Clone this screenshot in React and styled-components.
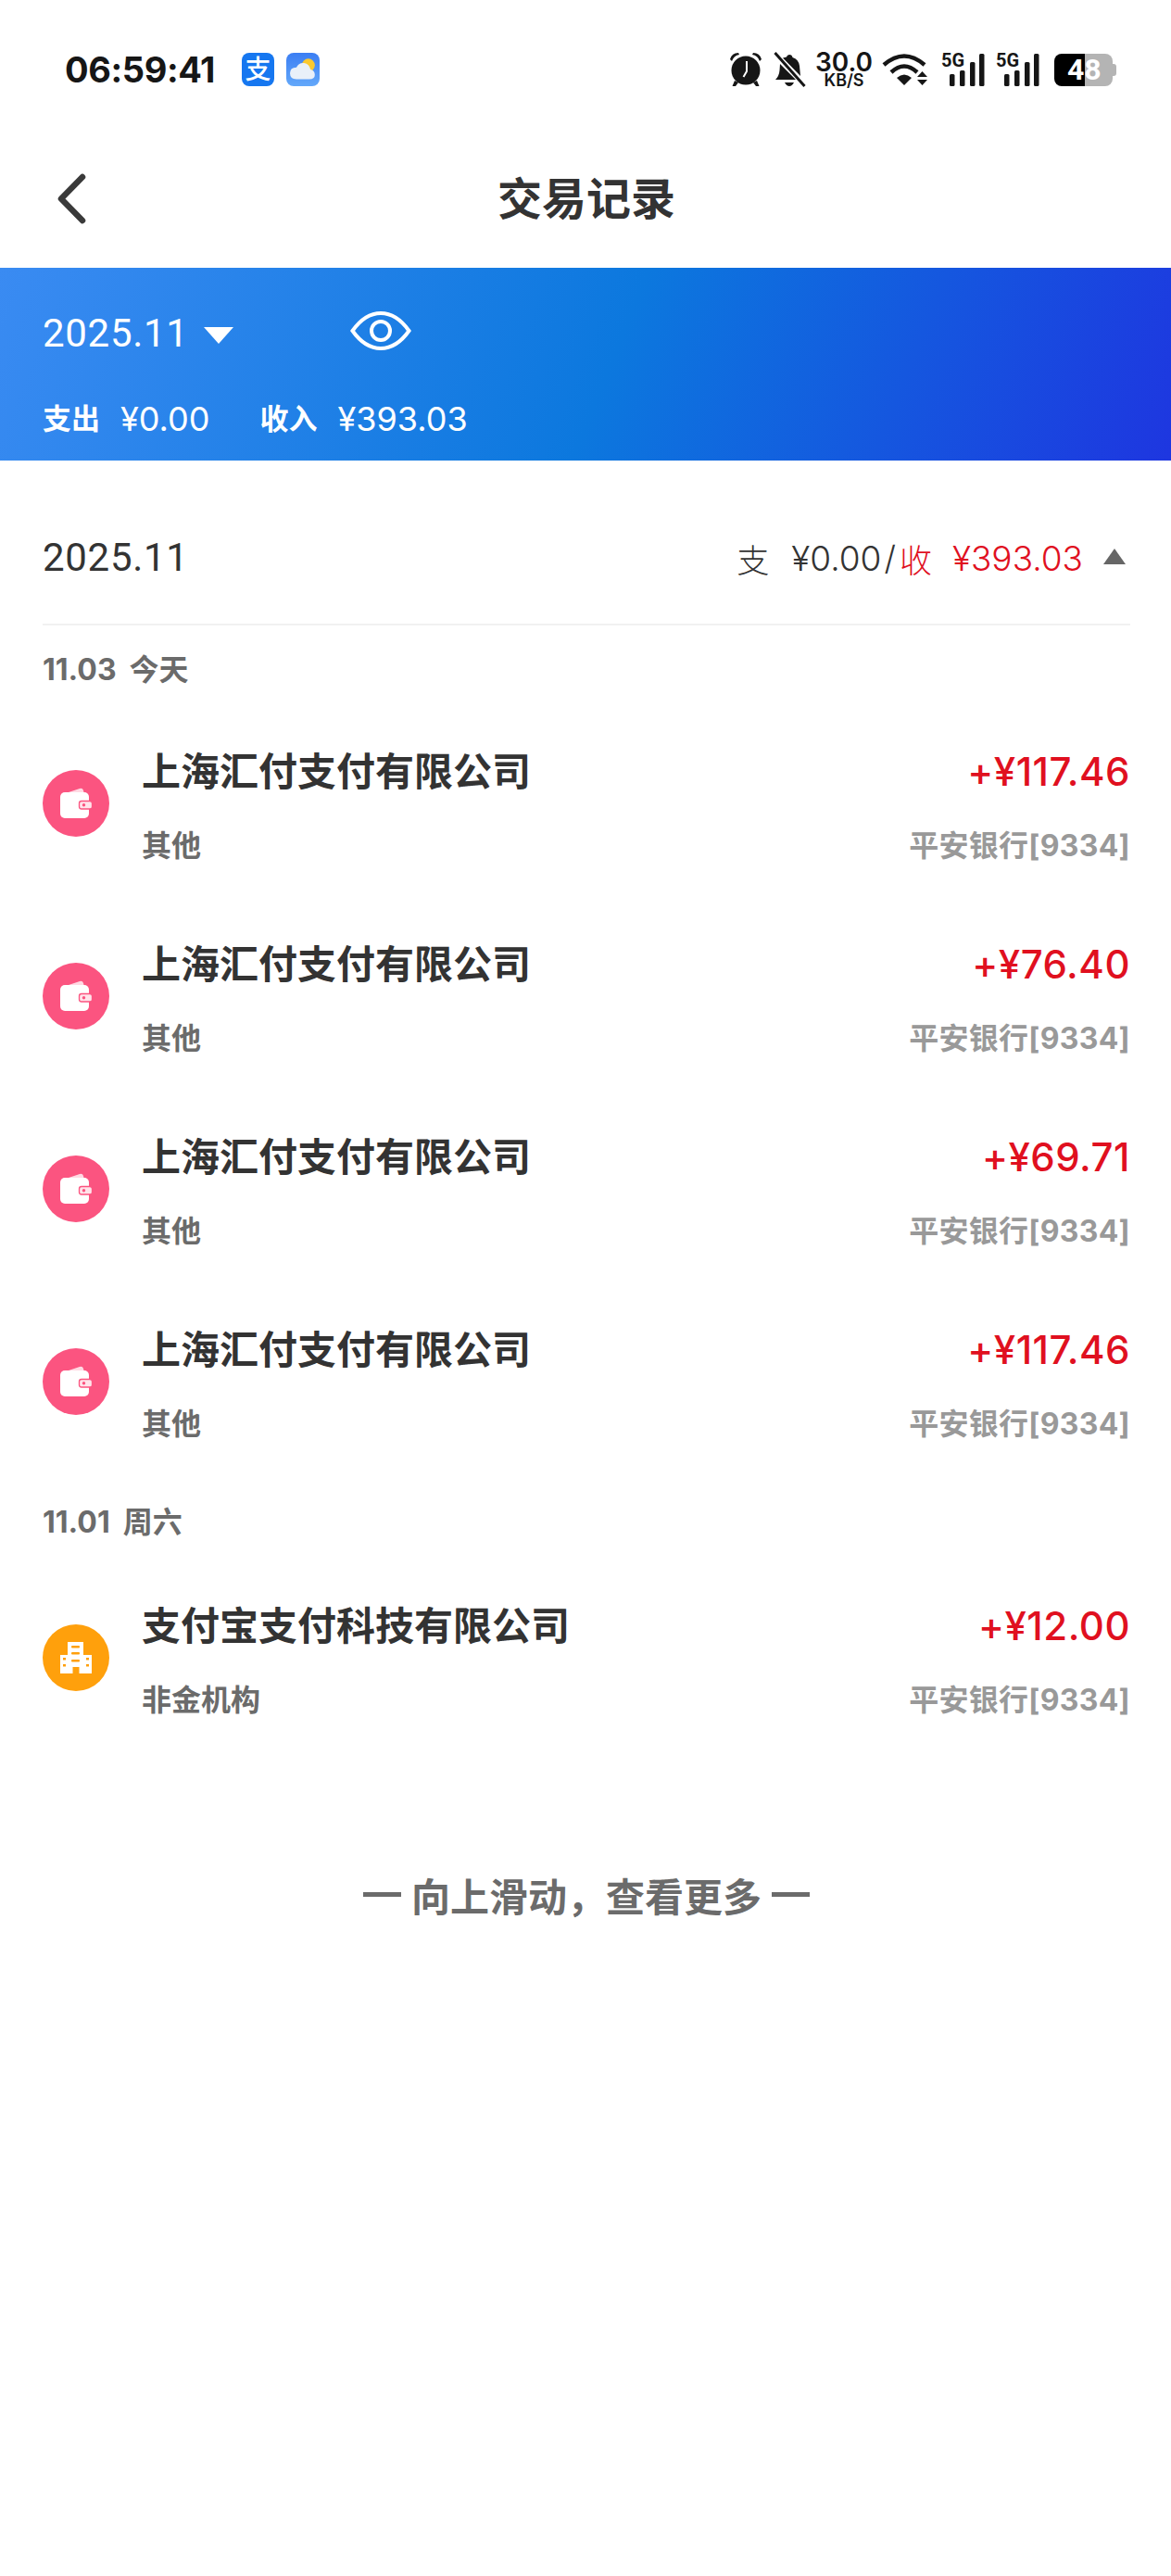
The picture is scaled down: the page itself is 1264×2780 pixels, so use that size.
import React from "react";
import styled, { createGlobalStyle } from "styled-components";

const GlobalStyle = createGlobalStyle`
  html, body {
    margin: 0;
    padding: 0;
    background: #fff;
    font-family: Inter, "Noto Sans CJK SC", sans-serif;
  }
  * { box-sizing: border-box; }
`;

const records = [
  {
    date: "11.03",
    day: "今天",
    items: [
      { name: "上海汇付支付有限公司", amount: "+¥117.46", kind: "其他", icon: "wallet" },
      { name: "上海汇付支付有限公司", amount: "+¥76.40", kind: "其他", icon: "wallet" },
      { name: "上海汇付支付有限公司", amount: "+¥69.71", kind: "其他", icon: "wallet" },
      { name: "上海汇付支付有限公司", amount: "+¥117.46", kind: "其他", icon: "wallet" },
    ],
  },
  {
    date: "11.01",
    day: "周六",
    items: [{ name: "支付宝支付科技有限公司", amount: "+¥12.00", kind: "非金机构", icon: "building" }],
  },
];

const AlarmIcon = () => (
  <svg width="36" height="38" viewBox="0 0 36 38">
    <path d="M1 8 Q3 1 10 1 L11 3 Q5 4 3 10 Z M35 8 Q33 1 26 1 L25 3 Q31 4 33 10 Z" fill="#161616" />
    <circle cx="18" cy="20" r="15.5" fill="#161616" />
    <path d="M6 31 L3.5 37 H7 L10 33 Z M30 31 L32.5 37 H29 L26 33 Z" fill="#161616" />
    <path d="M19 10 V21 L15.5 27" fill="none" stroke="#fff" strokeWidth="2" />
  </svg>
);

const BellOffIcon = () => (
  <svg width="35" height="38" viewBox="0 0 35 38">
    <path d="M17 3 Q20 3 20.5 6 Q27 8 28 15 L29 26 L10 6.5 Q12 6 14 5.5 Q14.500 3 17 3 Z" fill="#161616" />
    <path d="M7 13 L24 30 H2 Q6 26 6.500 20 Z" fill="#161616" />
    <path d="M12 33 H22 Q20 37 17 37 Q14 37 12 33 Z" fill="#161616" />
    <path d="M1.500 1 L33.500 37" stroke="#161616" strokeWidth="3" />
  </svg>
);

const WifiIcon = () => (
  <svg width="52" height="36" viewBox="0 0 52 36">
    <g fill="none" stroke="#161616" strokeWidth="4.500">
      <path d="M2 13 Q24 -6 46 13" />
      <path d="M10 21 Q24 8 38 21" />
    </g>
    <path d="M16 27 Q24 20 32 27 L24 35 Z" fill="#161616" />
    <path d="M38 26 L43.500 20 L49 26 Z M38 29 H49 L43.500 35 Z" fill="#161616" />
  </svg>
);

const WeatherIcon = () => (
  <svg width="28" height="24" viewBox="0 0 24 20">
    <circle cx="17" cy="6" r="6" fill="#fbc92f" />
    <path d="M6 19 Q0 19 0 13.500 Q0 8 6 8 Q8 3.500 13 4 Q18 5 19 10 Q23 11 23 15 Q23 19 18 19 Z" fill="#e9f0f9" />
  </svg>
);

const SignalBars = () => (
  <svg width="38" height="36" viewBox="0 0 38 36">
    <g fill="#161616">
      <rect x="0" y="23" width="5.500" height="13" rx="1.500" />
      <rect x="11" y="19" width="5.500" height="17" rx="1.500" />
      <rect x="22" y="10" width="5.500" height="26" rx="1.500" />
      <rect x="32" y="1" width="5.500" height="35" rx="1.500" />
    </g>
  </svg>
);

const BackIcon = () => (
  <svg width="31" height="55" viewBox="0 0 31 55">
    <path d="M27 4 L4 27.500 L27 51" fill="none" stroke="#3a3a3a" strokeWidth="6.500" strokeLinecap="round" strokeLinejoin="round" />
  </svg>
);

const EyeIcon = () => (
  <svg width="66" height="42" viewBox="0 0 66 42">
    <path d="M2.500 21 Q16 2 33 2 Q50 2 63.500 21 Q50 40 33 40 Q16 40 2.500 21 Z" fill="none" stroke="#fff" strokeWidth="4" />
    <circle cx="33" cy="21" r="10" fill="none" stroke="#fff" strokeWidth="4" />
  </svg>
);

const WalletIcon = () => (
  <svg width="36" height="34" viewBox="0 0 36 34">
    <path d="M7 6 L22 1 Q25 0 26 3 L27 7 Z" fill="#ffd9e3" />
    <rect x="1" y="5" width="31" height="28" rx="5" fill="#fff" />
    <rect x="21.500" y="14.500" width="14" height="8.500" rx="2.500" fill="#ffe3ea" stroke="#fb5480" strokeWidth="1.300" />
    <circle cx="26.500" cy="18.800" r="1.700" fill="#fb5480" />
  </svg>
);

const BuildingIcon = () => (
  <svg width="36" height="36" viewBox="0 0 36 36">
    <path d="M9 1 H26 V15 H35 V35 H21.500 V28 H14.500 V35 H1 V15 H9 Z" fill="#fff" />
    <g fill="#ffa00c">
      <rect x="13" y="5" width="9" height="2.500" rx="1" />
      <rect x="13" y="12" width="9" height="2.500" rx="1" />
      <rect x="13" y="20" width="9" height="2.500" rx="1" />
      <rect x="4" y="18" width="3" height="2.500" />
      <rect x="4" y="25" width="3" height="2.500" />
      <rect x="29" y="18" width="3" height="2.500" />
      <rect x="29" y="25" width="3" height="2.500" />
    </g>
  </svg>
);

const App = () => (
  <Page>
    <GlobalStyle />
    <StatusBar>
      <StatusLeft>
        <Clock>06:59:41</Clock>
        <AlipayTile>支</AlipayTile>
        <WeatherTile>
          <WeatherIcon />
        </WeatherTile>
      </StatusLeft>
      <StatusRight>
        <AlarmIcon />
        <BellOffIcon />
        <NetSpeed>
          <NetValue>30.0</NetValue>
          <NetUnit>KB/S</NetUnit>
        </NetSpeed>
        <WifiIcon />
        <Signal>
          <SignalLabel>5G</SignalLabel>
          <SignalBars />
        </Signal>
        <Signal>
          <SignalLabel>5G</SignalLabel>
          <SignalBars />
        </Signal>
        <Battery>
          <BatteryLevel>48</BatteryLevel>
        </Battery>
      </StatusRight>
    </StatusBar>

    <NavBar>
      <BackIcon />
      <NavTitle>交易记录</NavTitle>
    </NavBar>

    <Banner>
      <BannerTop>
        <BannerMonth>2025.11</BannerMonth>
        <DownCaret />
        <EyeSlot>
          <EyeIcon />
        </EyeSlot>
      </BannerTop>
      <BannerSummary>
        <SummaryLabel>支出</SummaryLabel>
        <SummaryValue>¥0.00</SummaryValue>
        <SummaryLabel $offset>收入</SummaryLabel>
        <SummaryValue>¥393.03</SummaryValue>
      </BannerSummary>
    </Banner>

    <Content>
      <MonthRow>
        <MonthLabel>2025.11</MonthLabel>
        <MonthTotals>
          <TotalWord>支</TotalWord>
          <TotalValue>¥0.00</TotalValue>
          <TotalSlash>/</TotalSlash>
          <TotalWord $income>收</TotalWord>
          <TotalValue $income>¥393.03</TotalValue>
          <UpCaret />
        </MonthTotals>
      </MonthRow>

      {records.map((group, g) => (
        <section key={group.date}>
          <DateHead $first={g === 0}>
            <span>{group.date}</span>
            <span>{group.day}</span>
          </DateHead>
          {group.items.map((item, i) => (
            <Row key={i}>
              <RowIcon $tone={item.icon === "wallet" ? "#fb5480" : "#ffa00c"}>
                {item.icon === "wallet" ? <WalletIcon /> : <BuildingIcon />}
              </RowIcon>
              <RowBody>
                <RowLine>
                  <RowName>{item.name}</RowName>
                  <RowAmount>{item.amount}</RowAmount>
                </RowLine>
                <RowLine $sub>
                  <RowKind>{item.kind}</RowKind>
                  <RowBank>平安银行[9334]</RowBank>
                </RowLine>
              </RowBody>
            </Row>
          ))}
        </section>
      ))}

      <MoreHint>
        <HintDash />
        向上滑动，查看更多
        <HintDash />
      </MoreHint>
    </Content>
  </Page>
);

const Page = styled.div`
  width: 1264px;
  min-height: 2780px;
  background: #fff;
  color: #333;
`;

const StatusBar = styled.div`
  height: 152px;
  padding: 0 63px 2px 70px;
  display: flex;
  align-items: center;
  justify-content: space-between;
`;

const StatusLeft = styled.div`
  display: flex;
  align-items: center;
`;

const Clock = styled.div`
  width: 191px;
  font-size: 38px;
  font-weight: 700;
  line-height: 48px;
  letter-spacing: -0.4px;
  color: #161616;
`;

const AlipayTile = styled.div`
  width: 35px;
  height: 36px;
  border-radius: 8px;
  background: #1677f0;
  color: #fff;
  font-size: 28px;
  font-weight: 500;
  line-height: 36px;
  text-align: center;
`;

const WeatherTile = styled.div`
  width: 36px;
  height: 36px;
  margin-left: 13px;
  border-radius: 8px;
  background: linear-gradient(180deg, #3b7ef3, #63a8fa);
  display: flex;
  align-items: center;
  justify-content: center;
`;

const StatusRight = styled.div`
  display: flex;
  align-items: center;
  gap: 12px;
`;

const NetSpeed = styled.div`
  width: 58px;
  display: flex;
  flex-direction: column;
  align-items: center;
  color: #161616;
`;

const NetValue = styled.div`
  font-size: 28px;
  font-weight: 600;
  line-height: 23px;
`;

const NetUnit = styled.div`
  font-size: 18px;
  font-weight: 600;
  line-height: 16px;
`;

const Signal = styled.div`
  position: relative;
  padding-left: 9px;
  display: flex;
`;

const SignalLabel = styled.span`
  position: absolute;
  top: -1px;
  left: 0;
  font-family: Roboto, sans-serif;
  font-size: 20px;
  font-weight: 700;
  line-height: 18px;
  color: #161616;
`;

const Battery = styled.div`
  position: relative;
  width: 63px;
  height: 35px;
  margin-left: 4px;
  border-radius: 8px;
  background: linear-gradient(90deg, #000 33px, #b4b4b4 33px);
  font-family: Roboto, sans-serif;
  font-size: 32px;
  font-weight: 700;
  line-height: 35px;
  color: #fff;
  &::after {
    content: "";
    position: absolute;
    top: 11px;
    right: -4px;
    width: 4px;
    height: 13px;
    border-radius: 0 3px 3px 0;
    background: #b4b4b4;
  }
`;

const BatteryLevel = styled.div`
  padding-left: 14px;
`;

const NavBar = styled.div`
  height: 137px;
  padding: 0 60px 12px 62px;
  display: grid;
  grid-template-columns: 1fr auto 1fr;
  align-items: center;
`;

const NavTitle = styled.h1`
  margin: 0;
  font-size: 48px;
  font-weight: 700;
  line-height: 60px;
  color: #333;
`;

const Banner = styled.div`
  height: 208px;
  padding: 46px 46px 0;
  background: linear-gradient(112deg, #3a8bf2 0%, #0c78de 52%, #1e36e0 100%);
  color: #fff;
`;

const BannerTop = styled.div`
  height: 50px;
  display: flex;
  align-items: center;
`;

const BannerMonth = styled.div`
  font-family: Roboto, sans-serif;
  font-size: 42px;
  line-height: 50px;
  letter-spacing: 0.7px;
`;

const DownCaret = styled.div`
  width: 0;
  height: 0;
  margin: 3px 0 0 16px;
  border-left: 16px solid transparent;
  border-right: 16px solid transparent;
  border-top: 18px solid #fff;
`;

const EyeSlot = styled.div`
  margin: -6px 0 0 126px;
  display: flex;
`;

const BannerSummary = styled.div`
  height: 44px;
  margin-top: 45px;
  display: flex;
  align-items: center;
`;

const SummaryLabel = styled.span`
  margin-left: ${(props) => (props.$offset ? "54px" : "0")};
  font-size: 31px;
  font-weight: 700;
  line-height: 44px;
`;

const SummaryValue = styled.span`
  margin-left: 22px;
  font-size: 36px;
  line-height: 44px;
`;

const Content = styled.div`
  padding: 0 44px 0 46px;
`;

const MonthRow = styled.div`
  box-sizing: content-box;
  height: 142px;
  padding-top: 34px;
  border-bottom: 2px solid #f1f1f1;
  display: flex;
  align-items: center;
  justify-content: space-between;
`;

const MonthLabel = styled.div`
  font-family: Roboto, sans-serif;
  font-size: 42px;
  line-height: 50px;
  letter-spacing: 0.7px;
  color: #333;
`;

const MonthTotals = styled.div`
  display: flex;
  align-items: center;
  color: #333;
`;

const TotalWord = styled.span`
  font-size: 35px;
  font-weight: 300;
  color: ${(props) => (props.$income ? "#e0101f" : "#333")};
`;

const TotalValue = styled.span`
  margin-left: ${(props) => (props.$income ? "22px" : "24px")};
  font-size: 37px;
  font-weight: 300;
  color: ${(props) => (props.$income ? "#e0101f" : "#333")};
`;

const TotalSlash = styled.span`
  margin: 0 4px 0 3px;
  font-size: 36px;
  font-weight: 300;
`;

const UpCaret = styled.div`
  width: 0;
  height: 0;
  margin: -4px 5px 0 22px;
  border-left: 12px solid transparent;
  border-right: 12px solid transparent;
  border-bottom: 17px solid #666;
`;

const DateHead = styled.div`
  height: ${(props) => (props.$first ? "88px" : "90px")};
  padding-top: 26px;
  display: flex;
  align-items: baseline;
  gap: 14px;
  font-size: 32px;
  font-weight: 700;
  line-height: 44px;
  color: #6b6b6b;
`;

const Row = styled.div`
  height: 208px;
  display: grid;
  grid-template-columns: 72px 1fr;
  align-items: center;
  column-gap: 35px;
`;

const RowIcon = styled.div`
  width: 72px;
  height: 72px;
  border-radius: 50%;
  background: ${(props) => props.$tone};
  display: flex;
  align-items: center;
  justify-content: center;
`;

const RowBody = styled.div`
  padding-top: 3px;
  display: flex;
  flex-direction: column;
  gap: 28px;
`;

const RowLine = styled.div`
  height: ${(props) => (props.$sub ? "44px" : "60px")};
  display: flex;
  align-items: center;
  justify-content: space-between;
`;

const RowName = styled.div`
  font-size: 42px;
  font-weight: 700;
  line-height: 60px;
  color: #333;
`;

const RowAmount = styled.div`
  font-size: 42px;
  font-weight: 500;
  line-height: 60px;
  letter-spacing: 0.5px;
  color: #e0101f;
`;

const RowKind = styled.div`
  font-size: 32px;
  font-weight: 700;
  line-height: 44px;
  color: #6b6b6b;
`;

const RowBank = styled.div`
  font-size: 32px;
  font-weight: 700;
  line-height: 44px;
  letter-spacing: 0.3px;
  color: #999;
`;

const MoreHint = styled.div`
  margin-top: 121px;
  height: 60px;
  display: flex;
  align-items: center;
  justify-content: center;
  gap: 11px;
  font-size: 42px;
  font-weight: 700;
  color: #6b6b6b;
`;

const HintDash = styled.span`
  width: 41px;
  height: 5px;
  background: #6b6b6b;
`;

export default App;
